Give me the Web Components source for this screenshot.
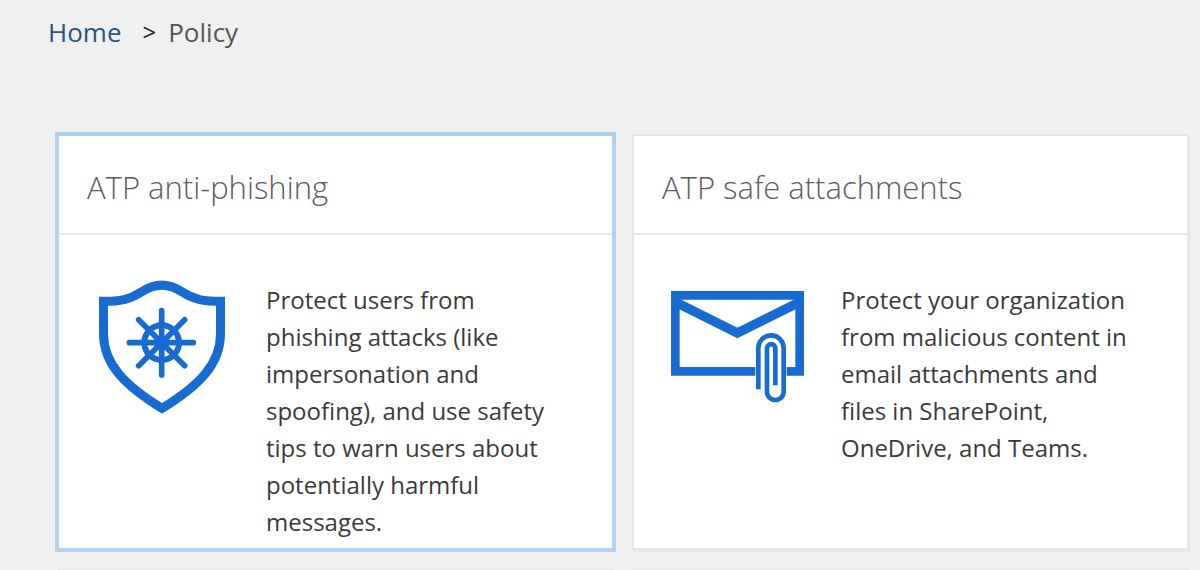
<!DOCTYPE html>
<html lang="en">
<head>
<meta charset="utf-8">
<title>Policy</title>
<style>
  body { margin: 0; height: 100vh; overflow: hidden; background: #f0f0f0; color: #333; font-family: "Open Sans", "Noto Sans", sans-serif; }
</style>
</head>
<body>
<policy-page>
  <bread-crumbs slot="nav" home="Home" current="Policy"></bread-crumbs>
  <policy-card selected>
    <span slot="title">ATP anti-phishing</span>
    <shield-icon slot="icon"></shield-icon>
    Protect users from phishing attacks (like impersonation and spoofing), and use safety tips to warn users about potentially harmful messages.
  </policy-card>
  <policy-card>
    <span slot="title">ATP safe attachments</span>
    <mail-icon slot="icon"></mail-icon>
    Protect your organization from malicious content in email attachments and files in SharePoint, OneDrive, and Teams.
  </policy-card>
  <policy-card></policy-card>
  <policy-card></policy-card>
</policy-page>
<script>
const define = (name, html, setup) => customElements.define(name, class extends HTMLElement {
  constructor() {
    super();
    this.attachShadow({ mode: 'open' }).innerHTML = html;
  }
  connectedCallback() { if (setup) setup(this, this.shadowRoot); }
});

define('policy-page', `
<style>
  :host { display: block; height: 100%; overflow: hidden; }
  header { padding: 13px 48px 0; height: 120px; box-sizing: border-box; }
  main { display: grid; grid-template-columns: 1fr 1fr; gap: 19px 18px; padding: 14px 11px 19px 57px; }
</style>
<header><slot name="nav"></slot></header>
<main><slot></slot></main>`);

define('bread-crumbs', `
<style>
  :host { display: block; font-size: 26px; line-height: 38px; }
  nav { display: flex; }
  a { color: #2a5580; text-decoration: none; }
  .sep { color: #222; font-size: 24px; margin: 0 12px 0 21px; }
  .current { color: #555; }
</style>
<nav aria-label="Breadcrumb"><a href="#home"></a><span class="sep">&gt;</span><span class="current" aria-current="page"></span></nav>`,
(el, root) => {
  root.querySelector('a').textContent = el.getAttribute('home');
  root.querySelector('.current').textContent = el.getAttribute('current');
});

define('policy-card', `
<style>
  :host { display: block; box-sizing: border-box; min-height: 416px; background: #fff; border: 2px solid #e5e5e5; box-shadow: 2px 2px 0 #e8e8e8; }
  :host([selected]) { border-color: #b1d3ee; box-shadow: 0 0 0 2px #b1d3ee; }
  h2 { margin: 0; min-height: 44px; padding: 29px 28px 24px; border-bottom: 2px solid #e6e6e6; font-size: 31px; line-height: 44px; font-weight: 300; color: #5c5c5c; }
  .body { display: flex; gap: 37px; padding: 45px 48px 0 36px; }
  .icon { flex: none; width: 134px; height: 134px; display: flex; align-items: center; justify-content: center; }
  p { margin: 0; padding-top: 1px; flex: 1; font-size: 24px; line-height: 37px; color: #3a3a3a; }
</style>
<h2><slot name="title"></slot></h2>
<div class="body"><div class="icon"><slot name="icon"></slot></div><p><slot></slot></p></div>`);

define('shield-icon', `
<style>:host, svg { display: block; }</style>
<svg width="126" height="134" viewBox="58 44 378 402" fill="none" stroke="#176bd1" aria-hidden="true">
  <path stroke-width="27" d="M71.500 108C120 108 150 103 185 80C225 53 268 53 308 80C343 103 374 108 422.500 108V205C422.500 295 360 360 247 429C134 360 71.500 295 71.500 205Z"/>
  <circle cx="246" cy="232" r="52" stroke-width="18"/>
  <path stroke-width="17" stroke-linecap="round" d="M246 136V329M149 232H341M177 163L315 301M315 163L177 301"/>
  <circle cx="246" cy="232" r="20" fill="#176bd1" stroke="none"/>
</svg>`);

define('mail-icon', `
<style>:host, svg { display: block; }</style>
<svg width="133" height="112" viewBox="33 33 399 336" fill="none" stroke="#176bd1" aria-hidden="true">
  <path stroke-width="26" d="M46 46H419V274H46Z"/>
  <path stroke-width="28" d="M46 66L232 159L419 66"/>
  <path fill="#fff" stroke="#fff" stroke-width="18" d="M295 328V204A38 38 0 0 1 371 204V335A25 25 0 0 1 321 335V328Z"/>
  <path stroke-width="14" d="M295 328V204A38 38 0 0 1 371 204V335A25 25 0 0 1 321 335V205A12.500 12.500 0 0 1 346 205V316"/>
</svg>`);
</script>
</body>
</html>
